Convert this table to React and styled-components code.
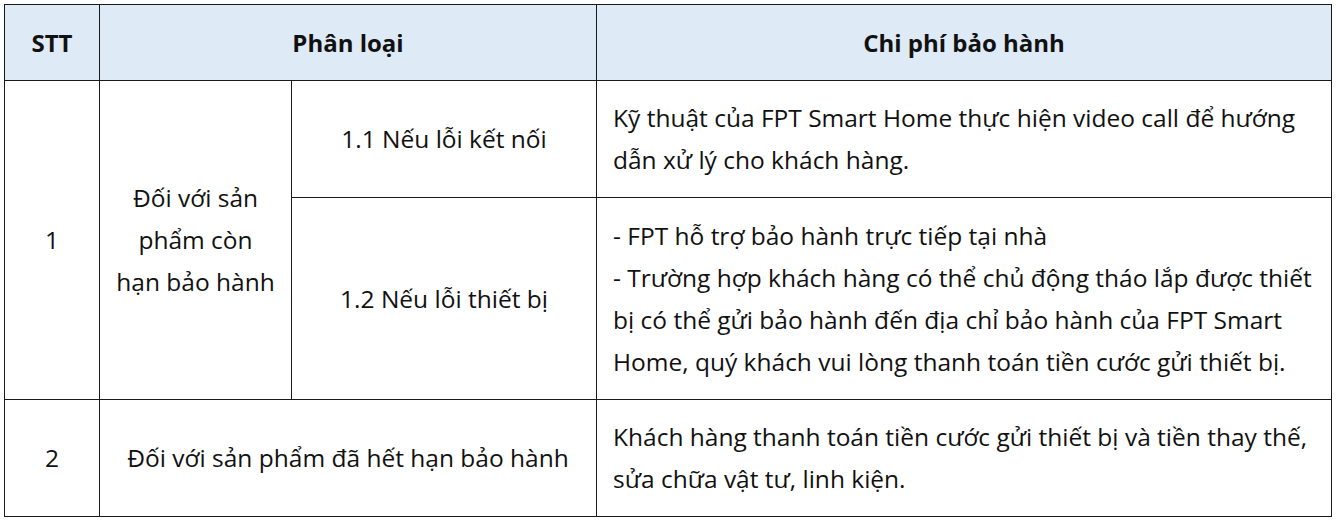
import React from "react";
import styled, { createGlobalStyle } from "styled-components";

const GlobalStyle = createGlobalStyle`
    html, body {
        margin: 0;
        padding: 0;
        background: #ffffff;
    }
`;

const rows = {
    headers: ["STT", "Phân loại", "Chi phí bảo hành"],
};

function App() {
    return (
        <Page>
            <GlobalStyle />
            <Table>
                <colgroup>
                    <col style={{ width: 95 }} />
                    <col style={{ width: 192 }} />
                    <col style={{ width: 305 }} />
                    <col style={{ width: 735 }} />
                </colgroup>
                <thead>
                    <HeadRow>
                        <HeadCell>{rows.headers[0]}</HeadCell>
                        <HeadCell colSpan={2}>{rows.headers[1]}</HeadCell>
                        <HeadCell>{rows.headers[2]}</HeadCell>
                    </HeadRow>
                </thead>
                <tbody>
                    <BodyRow $height={117}>
                        <Cell rowSpan={2}>1</Cell>
                        <Cell rowSpan={2}>
                            Đối với sản<br />phẩm còn<br />hạn bảo hành
                        </Cell>
                        <Cell>1.1 Nếu lỗi kết nối</Cell>
                        <Cell $left>
                            Kỹ thuật của FPT Smart Home thực hiện video call để hướng<br />
                            dẫn xử lý cho khách hàng.
                        </Cell>
                    </BodyRow>
                    <BodyRow $height={202}>
                        <Cell>1.2 Nếu lỗi thiết bị</Cell>
                        <Cell $left>
                            - FPT hỗ trợ bảo hành trực tiếp tại nhà<br />
                            - Trường hợp khách hàng có thể chủ động tháo lắp được thiết<br />
                            bị có thể gửi bảo hành đến địa chỉ bảo hành của FPT Smart<br />
                            Home, quý khách vui lòng thanh toán tiền cước gửi thiết bị.
                        </Cell>
                    </BodyRow>
                    <BodyRow $height={117}>
                        <Cell>2</Cell>
                        <Cell colSpan={2}>Đối với sản phẩm đã hết hạn bảo hành</Cell>
                        <Cell $left>
                            Khách hàng thanh toán tiền cước gửi thiết bị và tiền thay thế,<br />
                            sửa chữa vật tư, linh kiện.
                        </Cell>
                    </BodyRow>
                </tbody>
            </Table>
        </Page>
    );
}

const Page = styled.div`
    padding: 4px;
`;

const Table = styled.table`
    width: 1328px;
    table-layout: fixed;
    border-collapse: collapse;
    font-family: "Open Sans", "Noto Sans", sans-serif;
    color: #111111;
`;

const HeadRow = styled.tr`
    height: 76px;
    background: #deeaf6;
`;

const HeadCell = styled.th`
    border: 1px solid #1a1a1a;
    font-size: 24px;
    font-weight: 700;
    text-align: center;
    vertical-align: middle;
    padding: 0 8px;
    white-space: nowrap;
`;

const BodyRow = styled.tr`
    height: ${p => p.$height}px;
`;

const Cell = styled.td`
    border: 1px solid #1a1a1a;
    font-size: 24.5px;
    line-height: 42px;
    text-align: ${p => (p.$left ? "left" : "center")};
    vertical-align: middle;
    padding: ${p => (p.$left ? "0 4px 0 16px" : "0 4px")};
    white-space: nowrap;
    overflow: hidden;
`;

export default App;
